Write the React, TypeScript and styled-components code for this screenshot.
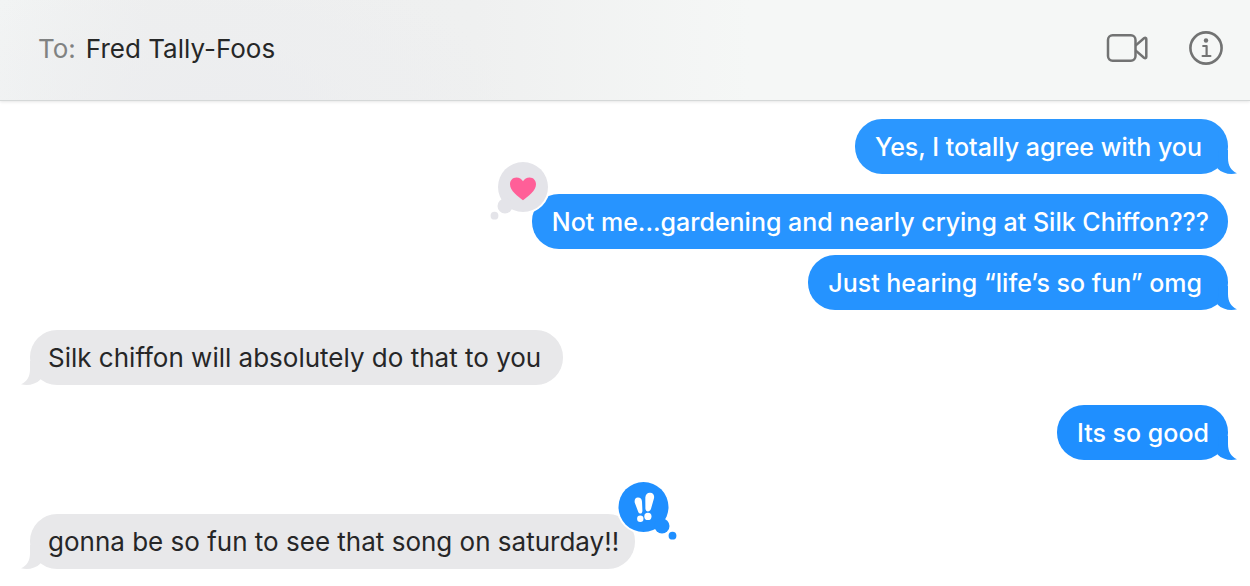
import React from 'react';
import styled, { createGlobalStyle, css } from 'styled-components';

const GlobalStyle = createGlobalStyle`
  * { box-sizing: border-box; }
  body {
    margin: 0;
    background: #fff;
    color: #262727;
    font-family: Inter, "Liberation Sans", sans-serif;
    font-size: 26px;
    line-height: 31px;
  }
`;

type Side = 'sent' | 'received';

const Window = styled.div`
  display: flex;
  flex-direction: column;
  min-height: 100vh;
  overflow: hidden;
`;

const Header = styled.header`
  display: flex;
  align-items: center;
  justify-content: space-between;
  min-height: 101px;
  padding: 0 26px 4px 38px;
  border-bottom: 1px solid #d5d8d8;
  box-shadow: 0 1px 3px rgba(0, 0, 0, 0.1);
  background:
    radial-gradient(ellipse 300px 150px at 210px 110px, #ecedef 0%, rgba(237, 239, 239, 0) 100%),
    linear-gradient(90deg, #f2f4f4 0%, #eeefef 12%, #eff0f0 38%, #f5f7f6 60%);
`;

const Recipient = styled.h1`
  display: flex;
  gap: 10px;
  margin: 0;
  font-size: inherit;
  font-weight: 400;
`;

const ToLabel = styled.span`
  color: #808282;
`;

const Actions = styled.div`
  display: flex;
  align-items: center;
  gap: 40px;
`;

const IconButton = styled.button`
  display: flex;
  padding: 0;
  border: 0;
  background: none;
  color: #727373;
  cursor: pointer;
`;

const Thread = styled.ol`
  display: flex;
  flex-direction: column;
  margin: 0;
  padding: 18px 22px 17px 30px;
  list-style: none;
`;

const Row = styled.li<{ $side: Side; $gap: number }>`
  display: flex;
  justify-content: ${(p) => (p.$side === 'sent' ? 'flex-end' : 'flex-start')};
  margin-top: ${(p) => p.$gap}px;
`;

const Bubble = styled.div<{ $side: Side; $color: string; $wide: boolean }>`
  position: relative;
  border-radius: 27px;
  background: ${(p) => p.$color};
  ${(p) =>
    p.$side === 'sent'
      ? css`
          padding: 13px ${p.$wide ? 26 : 19}px 11px 20px;
          color: #fff;
          font-size: 25px;
          font-weight: 500;
        `
      : css`
          padding: 12px ${p.$wide ? 22 : 16}px 12px 18px;
          color: #262627;
        `}
`;

const TailSvg = styled.svg<{ $side: Side }>`
  position: absolute;
  bottom: 0;
  ${(p) =>
    p.$side === 'sent'
      ? css`right: -9px;`
      : css`
          left: -9px;
          transform: scaleX(-1);
        `}
`;

const ReactionSvg = styled.svg<{ $edge: 'left' | 'right' }>`
  position: absolute;
  top: -34px;
  ${(p) => p.$edge}: -44px;
`;

const Tail = ({ side, color }: { side: Side; color: string }) => (
  <TailSvg $side={side} width="24" height="24" viewBox="0 0 24 24" aria-hidden="true">
    <path d="M6 0H15V8C15 15.500 18 20.500 24 23.300C17 25 9.500 23.500 4.500 18.500Z" fill={color} />
  </TailSvg>
);

const HeartReaction = () => (
  <ReactionSvg $edge="left" width="64" height="64" viewBox="0 0 64 64" role="img" aria-label="Loved">
    <circle cx="35" cy="27" r="27" fill="#fff" />
    <g fill="#e4e4e9">
      <circle cx="35" cy="27" r="25" />
      <circle cx="17" cy="46" r="7.500" />
      <circle cx="6.500" cy="55.700" r="3.900" />
    </g>
    <path
      d="M35 40.200C30 36.500 22 31 22 24.300C22 20.300 24.700 17.500 28.400 17.500C31.300 17.500 33.600 18.900 35 21.200C36.400 18.900 38.700 17.500 41.600 17.500C45.300 17.500 48 20.300 48 24.300C48 31 40 36.500 35 40.200Z"
      fill="#ff5f98"
    />
  </ReactionSvg>
);

const EmphasisReaction = () => (
  <ReactionSvg $edge="right" width="64" height="64" viewBox="0 0 64 64" role="img" aria-label="Emphasized">
    <circle cx="28.500" cy="27" r="27" fill="#fff" />
    <g fill="#1f8fff">
      <circle cx="28.500" cy="27" r="25" />
      <circle cx="47" cy="46" r="7.500" />
      <circle cx="57.500" cy="55.700" r="3.900" />
    </g>
    <g fill="#fff">
      <path d="M19.700 22.500C19.300 19.300 20.500 17.700 22.800 17.600C25.300 17.500 26.800 18.900 27 21.700L27.400 30.500C27.500 34.200 24 34.500 23.100 31.500Z" />
      <path d="M30.300 17.500C30.600 14.200 32.500 12.500 35.200 12.700C38.200 12.900 39.600 15 39 18.200L36 28.700C34.800 32.500 30.600 32.300 30.400 28.500Z" />
      <circle cx="25.300" cy="38.800" r="3.200" />
      <circle cx="32.900" cy="36.400" r="3.600" />
    </g>
  </ReactionSvg>
);

const VideoIcon = () => (
  <svg width="42" height="30" viewBox="0 0 42 30" fill="none" stroke="currentColor" strokeWidth="2.500" strokeLinejoin="round" aria-hidden="true">
    <rect x="2" y="2.300" width="27.500" height="25.400" rx="4.600" />
    <path d="M29.500 12.600L38 5.300C39.200 4.400 40.300 4.700 40.300 6.100V23.900C40.300 25.300 39.200 25.600 38 24.700L29.500 17.400" />
  </svg>
);

const InfoIcon = () => (
  <svg width="36" height="36" viewBox="0 0 36 36" fill="none" stroke="currentColor" strokeWidth="2.200" strokeLinecap="round" strokeLinejoin="round" aria-hidden="true">
    <circle cx="18" cy="18" r="15.600" strokeWidth="2.600" />
    <path d="M15.200 16H18.600V26M14.600 26H22.400" />
    <circle cx="18" cy="10.500" r="2.200" fill="currentColor" stroke="none" />
  </svg>
);

interface Message {
  text: string;
  side: Side;
  color: string;
  gap: number;
  tail?: boolean;
  wide?: boolean;
  reaction?: React.ReactNode;
}

const GRAY = '#e8e8ea';

const messages: Message[] = [
  { text: 'Yes, I totally agree with you', side: 'sent', color: '#2b97ff', gap: 0, tail: true, wide: true },
  { text: 'Not me...gardening and nearly crying at Silk Chiffon???', side: 'sent', color: '#2794ff', gap: 20, reaction: <HeartReaction /> },
  { text: 'Just hearing “life’s so fun” omg', side: 'sent', color: '#2593ff', gap: 6, tail: true, wide: true },
  { text: 'Silk chiffon will absolutely do that to you', side: 'received', color: GRAY, gap: 20, tail: true, wide: true },
  { text: 'Its so good', side: 'sent', color: '#1f8fff', gap: 20, tail: true },
  { text: 'gonna be so fun to see that song on saturday!!', side: 'received', color: GRAY, gap: 54, tail: true, reaction: <EmphasisReaction /> },
];

export default function App() {
  return (
    <Window>
      <GlobalStyle />
      <Header>
        <Recipient>
          <ToLabel>To:</ToLabel>
          <span>Fred Tally-Foos</span>
        </Recipient>
        <Actions>
          <IconButton type="button" aria-label="Start video call"><VideoIcon /></IconButton>
          <IconButton type="button" aria-label="Conversation details"><InfoIcon /></IconButton>
        </Actions>
      </Header>
      <Thread>
        {messages.map((m) => (
          <Row key={m.text} $side={m.side} $gap={m.gap}>
            <Bubble $side={m.side} $color={m.color} $wide={!!m.wide}>
              {m.text}
              {m.tail && <Tail side={m.side} color={m.color} />}
              {m.reaction}
            </Bubble>
          </Row>
        ))}
      </Thread>
    </Window>
  );
}
